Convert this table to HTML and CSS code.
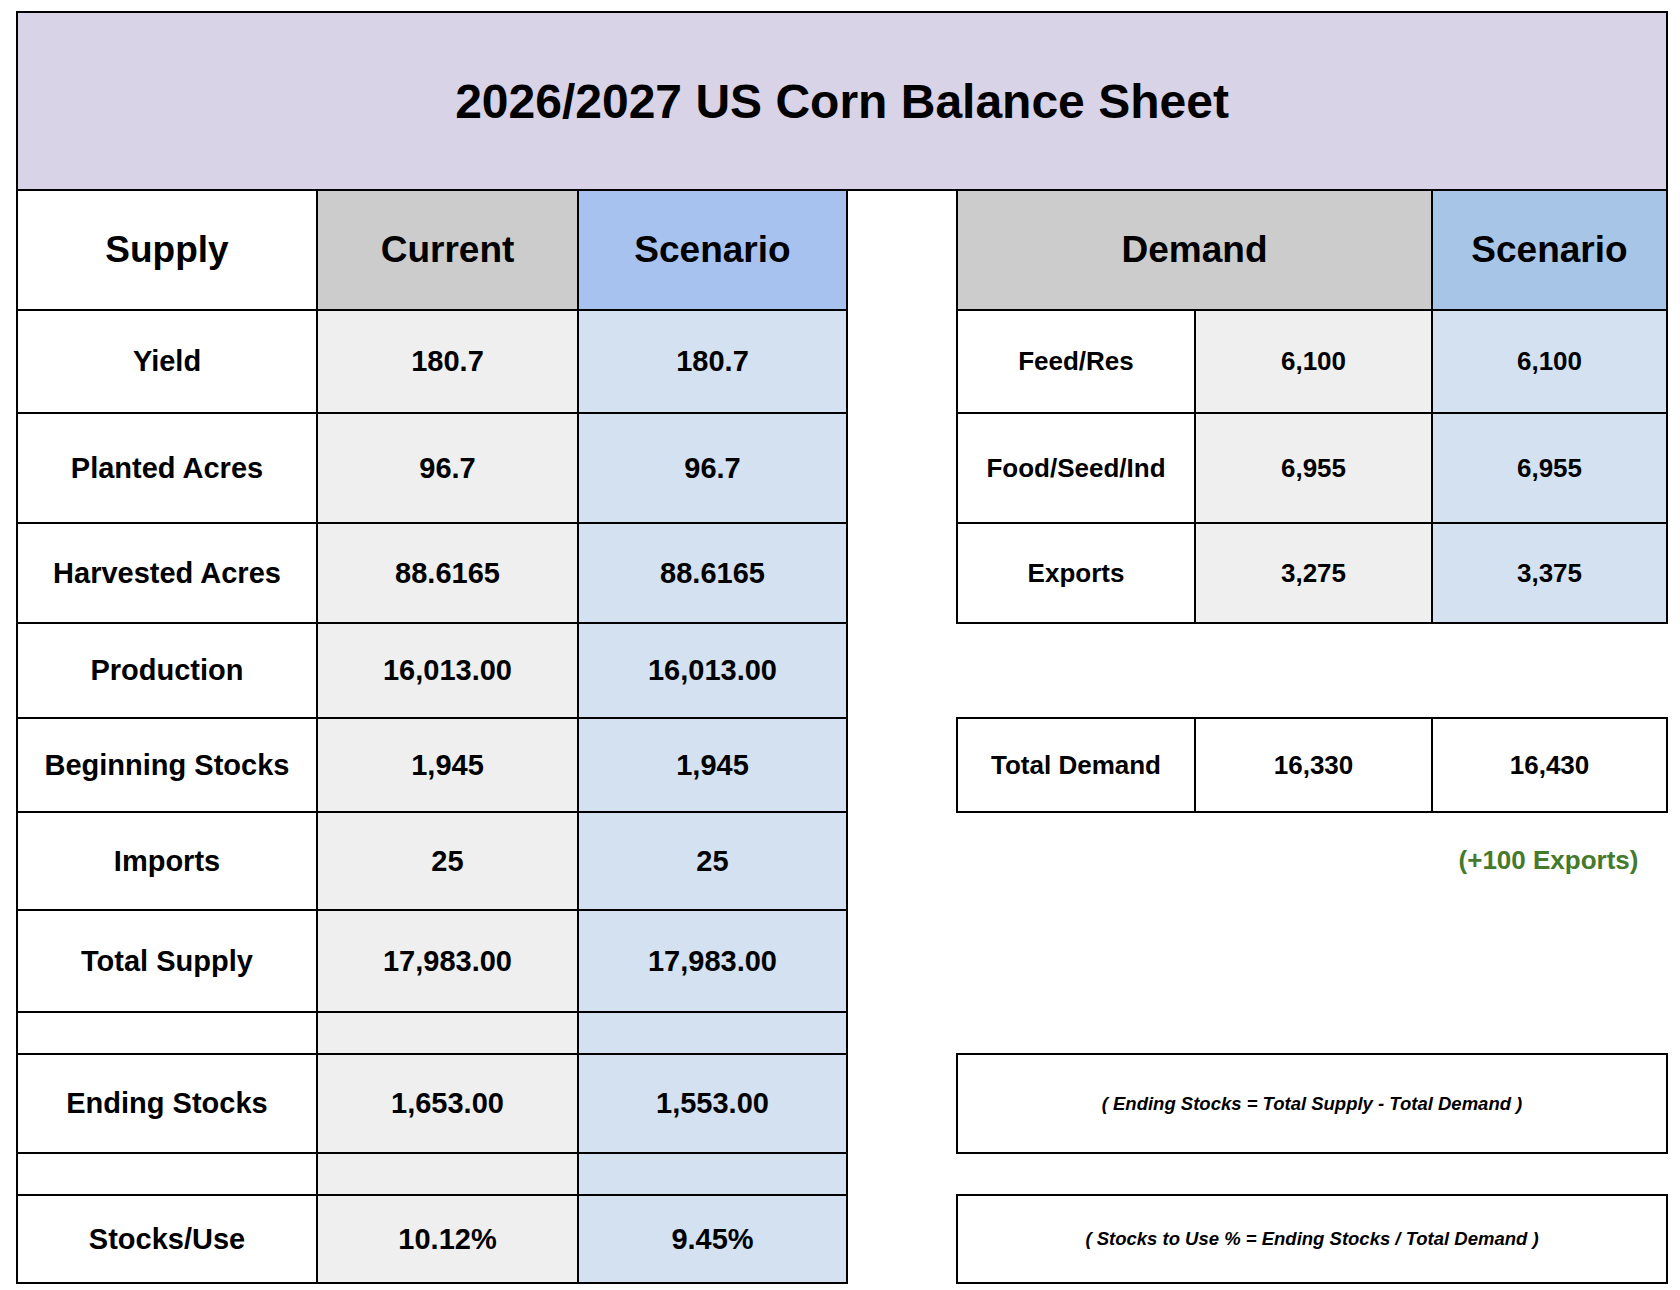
FILE: index.html
```html
<!DOCTYPE html>
<html lang="en">
<head>
<meta charset="utf-8">
<title>2026/2027 US Corn Balance Sheet</title>
<link rel="stylesheet" href="styles.css">
</head>
<body>
<div class="page">
  <div class="sheet">
    <div class="cell title span7">2026/2027 US Corn Balance Sheet</div>

    <div class="cell head white">Supply</div>
    <div class="cell head gray">Current</div>
    <div class="cell head blue-a">Scenario</div>
    <div class="gap"></div>
    <div class="cell head gray span2">Demand</div>
    <div class="cell head blue-b">Scenario</div>

    <div class="cell sup white">Yield</div>
    <div class="cell sup lgray">180.7</div>
    <div class="cell sup lblue">180.7</div>
    <div class="gap"></div>
    <div class="cell dem white">Feed/Res</div>
    <div class="cell dem lgray">6,100</div>
    <div class="cell dem lblue">6,100</div>

    <div class="cell sup white">Planted Acres</div>
    <div class="cell sup lgray">96.7</div>
    <div class="cell sup lblue">96.7</div>
    <div class="gap"></div>
    <div class="cell dem white">Food/Seed/Ind</div>
    <div class="cell dem lgray">6,955</div>
    <div class="cell dem lblue">6,955</div>

    <div class="cell sup white">Harvested Acres</div>
    <div class="cell sup lgray">88.6165</div>
    <div class="cell sup lblue">88.6165</div>
    <div class="gap"></div>
    <div class="cell dem white">Exports</div>
    <div class="cell dem lgray">3,275</div>
    <div class="cell dem lblue">3,375</div>

    <div class="cell sup white">Production</div>
    <div class="cell sup lgray">16,013.00</div>
    <div class="cell sup lblue">16,013.00</div>
    <div class="gap span4"></div>

    <div class="cell sup white">Beginning Stocks</div>
    <div class="cell sup lgray">1,945</div>
    <div class="cell sup lblue">1,945</div>
    <div class="gap"></div>
    <div class="cell dem white">Total Demand</div>
    <div class="cell dem white">16,330</div>
    <div class="cell dem white">16,430</div>

    <div class="cell sup white">Imports</div>
    <div class="cell sup lgray">25</div>
    <div class="cell sup lblue">25</div>
    <div class="gap span3"></div>
    <div class="note">(+100 Exports)</div>

    <div class="cell sup white">Total Supply</div>
    <div class="cell sup lgray">17,983.00</div>
    <div class="cell sup lblue">17,983.00</div>
    <div class="gap span4"></div>

    <div class="cell white"></div>
    <div class="cell lgray"></div>
    <div class="cell lblue"></div>
    <div class="gap span4"></div>

    <div class="cell sup white">Ending Stocks</div>
    <div class="cell sup lgray">1,653.00</div>
    <div class="cell sup lblue">1,553.00</div>
    <div class="gap"></div>
    <div class="cell formula white span3">( Ending Stocks = Total Supply - Total Demand )</div>

    <div class="cell white"></div>
    <div class="cell lgray"></div>
    <div class="cell lblue"></div>
    <div class="gap span4"></div>

    <div class="cell sup white">Stocks/Use</div>
    <div class="cell sup lgray">10.12%</div>
    <div class="cell sup lblue">9.45%</div>
    <div class="gap"></div>
    <div class="cell formula white span3">( Stocks to Use % = Ending Stocks / Total Demand )</div>
  </div>
</div>
</body>
</html>
```

FILE: styles.css
```css
html, body {
  margin: 0;
  padding: 0;
  background: #ffffff;
}

body {
  font-family: "Liberation Sans", Arial, sans-serif;
  color: #000000;
  font-weight: bold;
}

.page {
  padding: 11px 0 0 16px;
}

.sheet {
  display: grid;
  grid-template-columns: 300px 261px 269px 110px 238px 237px 235px;
  grid-template-rows: 178px 120px 103px 110px 100px 95px 94px 98px 102px 42px 99px 42px 88px;
  width: 1650px;
  padding-bottom: 2px;
}

.cell {
  border: 2px solid #000000;
  margin-right: -2px;
  margin-bottom: -2px;
  display: flex;
  align-items: center;
  justify-content: center;
  text-align: center;
  white-space: nowrap;
  min-width: 0;
}

.gap {
  min-width: 0;
}

.span2 { grid-column: span 2; }
.span3 { grid-column: span 3; }
.span4 { grid-column: span 4; }
.span7 { grid-column: span 7; }

.title {
  background: #d9d3e8;
  font-size: 48px;
}

.head {
  font-size: 37px;
}

.sup {
  font-size: 29px;
}

.dem {
  font-size: 26px;
}

.white { background: #ffffff; }
.gray { background: #cccccc; }
.lgray { background: #efefef; }
.blue-a { background: #a8c2f0; }
.blue-b { background: #a7c5e6; }
.lblue { background: #d4e1f1; }

.note {
  display: flex;
  align-items: center;
  justify-content: center;
  color: #457a2c;
  font-size: 26px;
  white-space: nowrap;
}

.formula {
  font-size: 18.5px;
  font-style: italic;
}
```
